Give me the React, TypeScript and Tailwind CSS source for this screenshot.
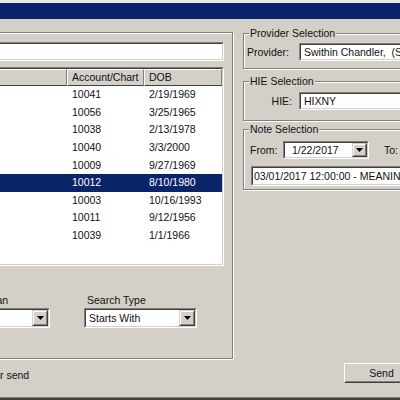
import React from "react";

function Sunken({ className = "", innerClass = "", children }: { className?: string; innerClass?: string; children?: React.ReactNode }) {
  return (
    <div className={`border border-t-[#808080] border-l-[#808080] border-b-white border-r-white ${className}`}>
      <div className={`h-full border border-t-[#404040] border-l-[#404040] border-b-[#d4d0c8] border-r-[#d4d0c8] bg-white ${innerClass}`}>
        {children}
      </div>
    </div>
  );
}

function Group({ label, className = "", children }: { label?: string; className?: string; children?: React.ReactNode }) {
  return (
    <div className={`relative border border-[#808080] shadow-[1px_1px_0_#fff,inset_1px_1px_0_#fff] ${className}`}>
      {label && (
        <span className="absolute left-[5px] top-[-7px] bg-[#d4d0c8] px-[1px] leading-[13px] whitespace-nowrap">{label}</span>
      )}
      {children}
    </div>
  );
}

function Arrow() {
  return (
    <svg width="7" height="4" viewBox="0 0 7 4">
      <polygon points="0,0 7,0 3.5,4" fill="#000" />
    </svg>
  );
}

function DropButton({ className = "" }: { className?: string }) {
  return (
    <div className={`h-full border border-t-[#d4d0c8] border-l-[#d4d0c8] border-b-[#404040] border-r-[#404040] ${className}`}>
      <div className="h-full border border-t-white border-l-white border-b-[#808080] border-r-[#808080] bg-[#d4d0c8] flex items-center justify-center">
        <Arrow />
      </div>
    </div>
  );
}

function Combo({ text, className = "" }: { text?: string; className?: string }) {
  return (
    <Sunken className={`h-[20px] ${className}`} innerClass="flex items-center">
      <span className="flex-1 pl-[3px] whitespace-nowrap overflow-hidden">{text}</span>
      <DropButton className="w-[16px]" />
    </Sunken>
  );
}

const rows = [
  ["10041", "2/19/1969"],
  ["10056", "3/25/1965"],
  ["10038", "2/13/1978"],
  ["10040", "3/3/2000"],
  ["10009", "9/27/1969"],
  ["10012", "8/10/1980"],
  ["10003", "10/16/1993"],
  ["10011", "9/12/1956"],
  ["10039", "1/1/1966"],
];

function HeaderCell({ text, className = "" }: { text: string; className?: string }) {
  return (
    <div className={`h-[17px] border border-t-white border-l-white border-b-[#404040] border-r-[#808080] bg-[#d4d0c8] flex items-center pl-[4px] whitespace-nowrap overflow-hidden ${className}`}>
      {text}
    </div>
  );
}

export default function App() {
  return (
    <div className="w-[400px] h-[400px] overflow-hidden bg-[#d4d0c8] flex flex-col text-[10.5px] leading-[13px] text-[#111] font-['Liberation_Sans',Arial,sans-serif]">
      <div className="h-[3px] bg-[#ebe9e4] shrink-0" />
      <div className="h-[16px] bg-[#0a246a] shrink-0" />

      <div className="flex items-start shrink-0">
        {/* Left column */}
        <div className="ml-[-160px] mt-[13px] w-[393px] shrink-0">
          <Group className="h-[327px] pt-[9px] px-[8px]">
            <Sunken className="h-[19px]" />
            <Sunken className="mt-[6px] h-[199px]" innerClass="overflow-hidden">
              <div className="flex">
                <HeaderCell text="Patient Name" className="w-[216px]" />
                <HeaderCell text="Account/Chart" className="w-[77px]" />
                <HeaderCell text="DOB" className="w-[78px]" />
              </div>
              {rows.map(([acct, dob], i) => (
                <div
                  key={acct}
                  className={`flex h-[17.6px] items-center ${i === 5 ? "bg-[#0a246a] text-white" : ""}`}
                >
                  <div className="w-[216px]" />
                  <div className="w-[77px] pl-[5px]">{acct}</div>
                  <div className="w-[78px] pl-[5px]">{dob}</div>
                </div>
              ))}
            </Sunken>
            <div className="mt-[28px] flex">
              <div className="ml-[99px] w-[102px]">
                <div className="pl-[3px] whitespace-nowrap">Search Plan</div>
                <Combo className="mt-[1px]" />
              </div>
              <div className="ml-[34px] w-[113px]">
                <div className="pl-[3px] whitespace-nowrap">Search Type</div>
                <Combo className="mt-[1px]" text="Starts With" />
              </div>
            </div>
          </Group>
        </div>

        {/* Right column */}
        <div className="ml-[10px] mt-[14px] w-[200px] shrink-0">
          <Group label="Provider Selection" className="h-[36px] pt-[9px] pl-[3px]">
            <div className="flex items-center">
              <div className="w-[52px] shrink-0">Provider:</div>
              <Sunken className="h-[18px] flex-1" innerClass="flex items-center pl-[3px] whitespace-nowrap overflow-hidden">
                Swithin Chandler,&nbsp; (SCH)
              </Sunken>
            </div>
          </Group>

          <Group label="HIE Selection" className="mt-[12px] h-[40px] pt-[10px] pl-[3px]">
            <div className="flex items-center">
              <div className="w-[52px] shrink-0 text-right pr-[7px]">HIE:</div>
              <Sunken className="h-[18px] flex-1" innerClass="flex items-center pl-[3px]">
                HIXNY
              </Sunken>
            </div>
          </Group>

          <Group label="Note Selection" className="mt-[8px] h-[61px] pt-[11px] pl-[6px]">
            <div className="flex items-center">
              <div className="w-[33px] shrink-0">From:</div>
              <Sunken className="w-[86px] h-[18px] shrink-0" innerClass="flex items-center">
                <span className="flex-1 pl-[7px]">1/22/2017</span>
                <DropButton className="w-[15px]" />
              </Sunken>
              <div className="ml-[15px]">To:</div>
            </div>
            <Sunken className="mt-[7px] ml-[1px] h-[20px]" innerClass="flex items-center pl-[1px] whitespace-nowrap overflow-hidden">
              03/01/2017 12:00:00 - MEANINGFUL USE
            </Sunken>
          </Group>
        </div>
      </div>

      {/* Bottom row */}
      <div className="flex items-start w-[419px] mt-[4px] shrink-0">
        <div className="ml-[-42px] mt-[6px] whitespace-nowrap">Ready for send</div>
        <div className="ml-auto w-[75px] h-[20px] border border-t-white border-l-white border-b-[#404040] border-r-[#404040]">
          <div className="h-full border border-t-[#d4d0c8] border-l-[#d4d0c8] border-b-[#808080] border-r-[#808080] flex items-center justify-center">
            Send
          </div>
        </div>
      </div>

      <div className="mt-auto h-[3px] border-t border-t-[#808080] bg-[#404040] shrink-0" />
    </div>
  );
}
